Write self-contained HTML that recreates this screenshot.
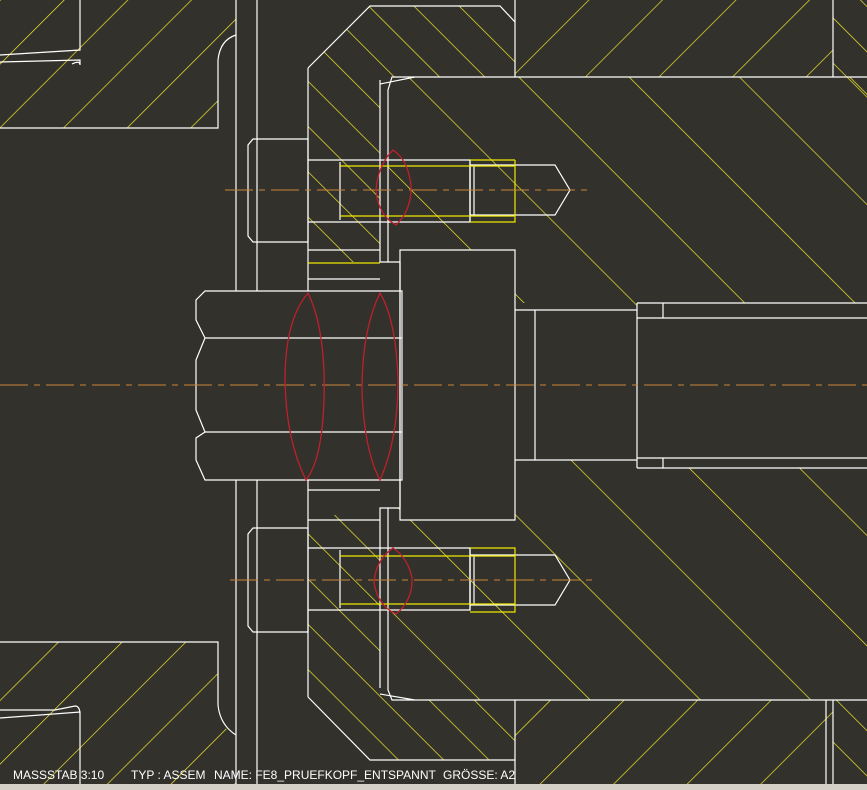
<!DOCTYPE html>
<html><head><style>
html,body{margin:0;padding:0;background:#32312c;}
svg{display:block}
text{font-family:"Liberation Sans",sans-serif;font-size:12px;fill:#fff}
</style></head><body>
<svg width="867" height="790" viewBox="0 0 867 790" xmlns="http://www.w3.org/2000/svg">
<defs>
<pattern id="hs" patternUnits="userSpaceOnUse" width="45" height="45" patternTransform="rotate(45)">
<line x1="0" y1="0" x2="0" y2="45" stroke="#f0e830" stroke-width="1.4"/></pattern>
<pattern id="hb" patternUnits="userSpaceOnUse" width="32" height="32" patternTransform="rotate(-45)">
<line x1="0" y1="0" x2="0" y2="32" stroke="#f0e830" stroke-width="1.4"/></pattern>
<pattern id="hbw" patternUnits="userSpaceOnUse" width="78" height="78" patternTransform="rotate(-45)">
<line x1="0" y1="0" x2="0" y2="78" stroke="#f0e830" stroke-width="1.4"/></pattern>
<pattern id="hs2" patternUnits="userSpaceOnUse" width="52" height="52" patternTransform="rotate(45)">
<line x1="0" y1="0" x2="0" y2="52" stroke="#f0e830" stroke-width="1.4"/></pattern>
</defs>
<rect width="867" height="790" fill="#32312c"/>
<path d="M0 0H236V35Q218 40 218 65V128H0Z" fill="url(#hs)"/>
<path d="M0 642H218V705Q218 728 236 735V784H0Z" fill="url(#hs)"/>
<path d="M515 0H833V77H515Z" fill="url(#hs2)"/>
<path d="M833 0H867V100H833Z" fill="url(#hb)"/>
<path d="M833 700H867V784H833Z" fill="url(#hb)"/>
<path d="M370 6H500L515 22V77H392L380 80V262H308V68Z" fill="url(#hb)"/>
<path d="M308 515H380V688L392 700H515V760H370L308 697Z" fill="url(#hb)"/>
<path d="M392 77H867V303H637V310H535V303H515V250H400V262H388V90Z" fill="url(#hbw)"/>
<path d="M392 700H867V468H637V460H535V468H515V520H400V508H388V690Z" fill="url(#hbw)"/>
<path d="M515 700H833V784H515Z" fill="url(#hs2)"/>
<g stroke="#fff" stroke-width="1.2" fill="none">
<path d="M0 128H218V60Q220 40 236 35"/>
<path d="M0 642H218V705Q220 725 236 735"/>
<path d="M236 0V291M236 480V784M257 0V291M257 480V784"/>
<path d="M0 55L80 50V0M0 62L80 60V65Q80 60 72 64"/>
<path d="M0 718L80 712V784M0 710H55L75 706Q80 706 80 715"/>
<path d="M308 68L370 6H500L515 22M308 68V291"/>
<path d="M308 697L370 760H515M308 480V697"/>
<path d="M380 80V262H388V90L392 77H867M380 84L415 77"/>
<path d="M380 688V508H388V690L392 700H867M380 694L415 700"/>
<path d="M515 0V77M515 700V784M833 0V77M833 700V784M826 784V700"/>
<path d="M400 250H515V520H400Z"/>
<path d="M388 262H400V508H388"/>
<path d="M515 310H535V460H515M535 310H637V460H535M637 303H867M637 318H867M637 458H867M637 468H867M663 303V318M663 458V468M637 303V468"/>
<path d="M253 139H308V242H253L248 236V145Z"/>
<path d="M253 528H308V632H253L248 626V534Z"/>
<path d="M205 291H402V480H205L196 460V438L205 432L196 410V360L205 338L196 320V300Z"/>
<path d="M205 338H402M205 432H402"/>
<path d="M308 160H470V222H308M308 250H380M308 279H380"/>
<path d="M470 165H555L570 190L555 215H470Z"/>
<path d="M340 162V220M470 160V222M474 165V215"/>
<path d="M308 548H470V610H308M308 520H380M308 490H380"/>
<path d="M470 555H555L570 580L555 605H470Z"/>
<path d="M340 550V608M470 548V610M474 555V605"/>
</g>
<g stroke="#f0e800" stroke-width="1.2" fill="none">
<path d="M340 166H515M340 216H515M515 160H470M470 222H515V160"/>
<path d="M340 556H515M340 604H515M470 548H515V612H470"/>
<path d="M308 263H380"/>
</g>
<g stroke="#c8883a" stroke-width="1" stroke-dasharray="28,6,6,6">
<line x1="0" y1="385" x2="867" y2="385"/>
<line x1="225" y1="190" x2="590" y2="190"/>
<line x1="230" y1="580" x2="595" y2="580"/>
</g>
<g stroke="#c0202a" stroke-width="1.3" fill="none">
<path d="M393 150Q378 165 376 190Q378 215 396 225Q412 210 411 185Q408 160 393 150Z"/>
<path d="M393 548Q376 560 374 582Q377 605 396 614Q413 600 412 578Q408 558 393 548Z"/>
<path d="M308 293Q285 320 285 380Q286 440 306 480Q322 460 324 400Q326 330 308 293Z"/>
<path d="M380 293Q362 330 362 390Q364 450 380 480Q398 440 398 380Q396 320 380 293Z"/>
</g>
<text x="13" y="779">MASSSTAB 3:10</text>
<text x="131" y="779">TYP : ASSEM</text>
<text x="214" y="779">NAME: FE8_PRUEFKOPF_ENTSPANNT</text>
<text x="443" y="779">GRÖSSE: A2</text>
<rect x="0" y="784" width="867" height="6" fill="#d4d0c8"/>
</svg>
</body></html>
